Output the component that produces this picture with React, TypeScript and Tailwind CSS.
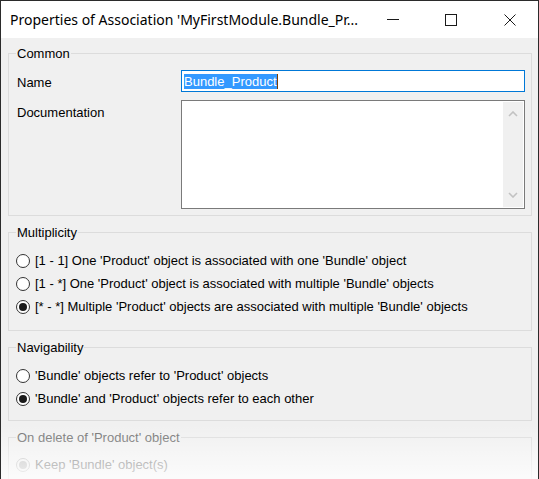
import { ReactNode } from 'react';

const Radio = ({ checked = false, disabled = false }: { checked?: boolean; disabled?: boolean }) => (
  <span
    className={`w-[14px] h-[14px] rounded-full border flex items-center justify-center shrink-0 ${
      disabled ? 'border-[#bcbcbc] bg-[#f0f0f0]' : 'border-[#333333] bg-white'
    }`}
  >
    {checked && (
      <span className={`w-[8px] h-[8px] rounded-full ${disabled ? 'bg-[#bcbcbc]' : 'bg-[#1a1a1a]'}`} />
    )}
  </span>
);

const RadioRow = ({ label, checked, disabled }: { label: string; checked?: boolean; disabled?: boolean }) => (
  <div className="h-[23px] flex items-center gap-[5px]">
    <Radio checked={checked} disabled={disabled} />
    <span className={disabled ? 'text-[#6d6d6d]' : 'text-black'}>{label}</span>
  </div>
);

// fieldset keeps no horizontal padding so the legend sits at the same x everywhere
const Group = ({
  title,
  className = '',
  disabled,
  children,
}: {
  title: string;
  className?: string;
  disabled?: boolean;
  children: ReactNode;
}) => (
  <fieldset className="border border-[#dcdcdc] w-[524px] mt-[10px] first:mt-0">
    <legend className={`ml-[7px] px-[1px] leading-[13px] ${disabled ? 'text-[#6d6d6d]' : 'text-black'}`}>
      {title}
    </legend>
    <div className={className}>{children}</div>
  </fieldset>
);

const Chevron = ({ up }: { up?: boolean }) => (
  <svg width="10" height="6" viewBox="0 0 10 6">
    <path
      d={up ? 'M1 5 L5 1 L9 5' : 'M1 1 L5 5 L9 1'}
      fill="none"
      stroke="#c2c2c2"
      strokeWidth="1.6"
    />
  </svg>
);

export default function App() {
  return (
    <div className="w-[539px] h-[479px] relative overflow-hidden bg-[#f0f0f0] border-x border-t border-[#2b2b2b] font-['Liberation_Sans',Arial,sans-serif] text-[13px] text-black">
      {/* title bar */}
      <div className="h-[37px] bg-white flex items-center">
        <div className="pl-[9px] flex-1 font-['Noto_Sans',sans-serif] text-[14px] leading-none text-black whitespace-nowrap">
          Properties of Association 'MyFirstModule.Bundle_Pr...
        </div>
        <div className="w-[12px] h-px bg-[#1a1a1a] mr-[46px]" />
        <div className="w-[12px] h-[12px] border border-[#1a1a1a] mr-[47px]" />
        <svg width="12" height="12" viewBox="0 0 12 12" className="mr-[22px]">
          <path d="M0.5 0.5 L11.5 11.5 M11.5 0.5 L0.5 11.5" stroke="#1a1a1a" strokeWidth="1" />
        </svg>
      </div>

      <div className="pl-[7px] pt-[9px]">
        <Group title="Common" className="pl-[8px] pr-[6px] pb-[6px]">
          <div className="grid grid-cols-[164px_1fr] mt-[10px]">
            <div className="flex items-center h-[22px] pt-[3px]">Name</div>
            <div className="h-[22px] border border-[#0078d7] bg-white flex items-center pl-[2px]">
              <span className="bg-[#3399ff] text-white leading-[15px]">Bundle_Product</span>
              <span className="w-px h-[15px] bg-[#7a3d00]" />
            </div>
            <div className="pt-[3px] mt-[8px]">Documentation</div>
            <div className="h-[109px] mt-[8px] border border-[#7a7a7a] bg-white flex justify-end p-px">
              <div className="w-[20px] bg-[#f0f0f0] flex flex-col items-center justify-between pt-[9px] pb-[9px]">
                <Chevron up />
                <Chevron />
              </div>
            </div>
          </div>
        </Group>

        <Group title="Multiplicity" className="pl-[7px] pt-[10px] pb-[12px]">
          <RadioRow label="[1 - 1] One 'Product' object is associated with one 'Bundle' object" />
          <RadioRow label="[1 - *] One 'Product' object is associated with multiple 'Bundle' objects" />
          <RadioRow checked label="[* - *] Multiple 'Product' objects are associated with multiple 'Bundle' objects" />
        </Group>

        <Group title="Navigability" className="pl-[7px] pt-[10px] pb-[10px]">
          <RadioRow label="'Bundle' objects refer to 'Product' objects" />
          <RadioRow checked label="'Bundle' and 'Product' objects refer to each other" />
        </Group>

        <Group title="On delete of 'Product' object" disabled className="pl-[7px] pt-[9px] pb-[10px]">
          <RadioRow checked disabled label="Keep 'Bundle' object(s)" />
        </Group>
      </div>

      {/* screenshot fade */}
      <div className="absolute left-[-1px] right-[-1px] top-[424px] h-[56px] pointer-events-none bg-linear-to-b from-white/0 to-white/80" />
    </div>
  );
}
